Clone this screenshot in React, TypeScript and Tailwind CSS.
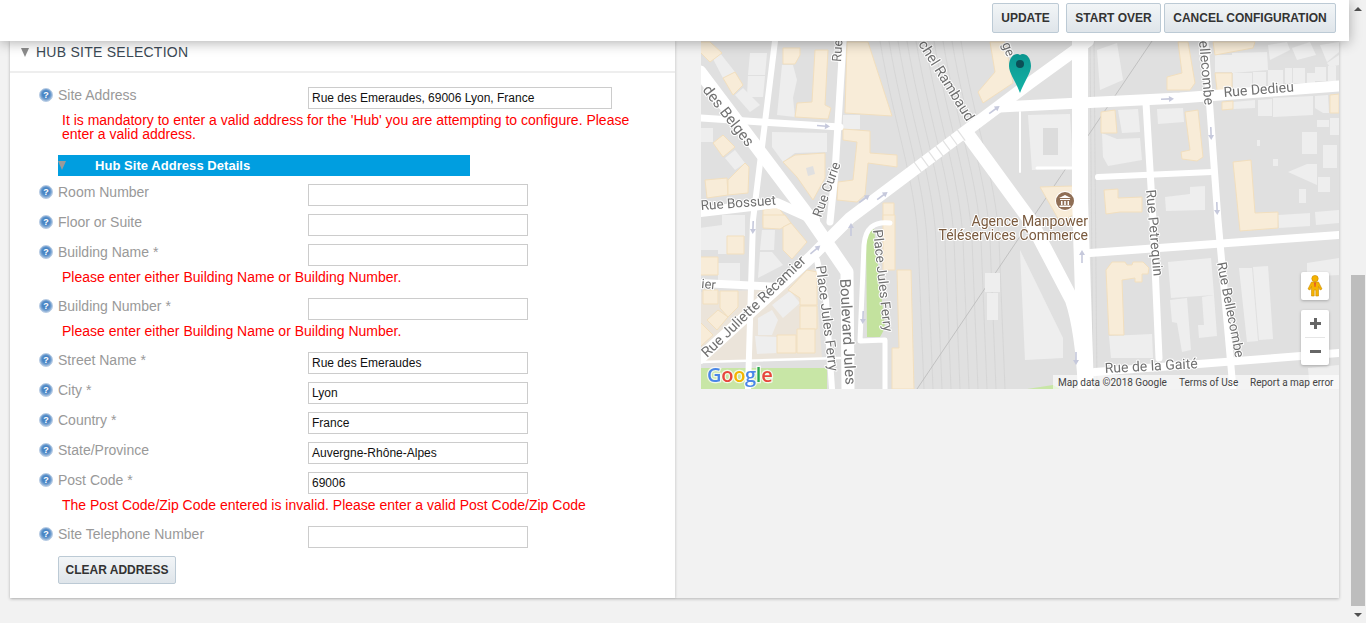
import React from "react";

const ORANGE: string[] = [
  "700,42 710,42 722,53 710,62 700,52",
  "847,42 868,42 892,116 845,113",
  "783,48 800,48 800,55 795,64 783,64",
  "815,50 828,50 825,105 831,108 828,119 795,117 797,103 812,102",
  "723,78 735,72 743,85 733,95",
  "843,129 870,131 870,153 897,155 897,167 868,163 865,195 857,202 837,200 838,182 853,180 857,142 843,140",
  "783,162 795,155 825,153 825,178 813,200 797,177",
  "713,143 723,135 735,147 723,157",
  "705,180 727,178 728,195 707,198",
  "728,180 745,163 749,167 748,193 728,195",
  "978,92 995,72 990,42 1005,42 1013,83 983,103",
  "883,203 894,203 894,220 883,220",
  "763,210 778,207 788,220 763,225",
  "1178,42 1188,42 1195,83 1190,90 1167,90 1167,77 1182,73",
  "1213,42 1255,42 1253,48 1215,55",
  "1215,73 1232,73 1232,90 1217,90",
  "1222,102 1233,101 1233,109 1222,110",
  "1330,95 1339,94 1339,113 1330,113",
  "1101,112 1115,110 1117,133 1101,133",
  "1185,112 1198,110 1203,157 1197,161 1182,159 1181,152 1190,150",
  "1233,162 1251,160 1255,213 1278,212 1278,228 1240,231",
  "1104,190 1118,189 1118,198 1142,197 1142,212 1120,212 1106,214",
  "1040,187 1073,186 1073,215 1060,222",
  "1106,270 1112,262 1125,262 1127,265 1132,265 1133,262 1143,262 1149,268 1148,274 1142,274 1142,282 1135,282 1135,278 1122,280 1124,335 1109,335",
  "763,215 785,215 791,223 780,229 763,228",
  "783,227 791,223 807,242 792,259 783,250",
  "727,236 744,236 744,254 727,254",
  "700,257 718,257 718,275 700,275",
  "703,290 718,290 718,304 703,304",
  "720,291 738,291 738,307 728,317 720,308",
  "707,320 718,310 728,317 717,330",
  "700,322 713,335 700,347",
  "807,270 817,272 817,305 800,305 800,298 788,290",
  "800,306 817,306 817,329 800,329",
  "797,329 815,329 815,353 797,353",
  "777,335 796,335 796,353 777,353",
  "883,215 895,215 895,270 883,270",
  "897,270 911,270 914,389 892,389 892,348 899,348",
];

const LIGHT: string[] = [
  "712,57 720,53 735,72 723,78",
  "735,95 743,88 760,105 750,112",
  "750,53 767,53 765,75 748,75",
  "748,76 765,76 763,97 747,97",
  "782,65 793,65 797,80 793,98 795,117 777,115",
  "843,115 860,115 860,129 843,129",
  "772,132 827,133 827,152 795,153 783,162 772,147",
  "725,158 735,150 745,163 735,170",
  "700,128 713,128 713,142 700,142",
  "1028,115 1070,114 1073,168 1032,170",
  "1097,50 1117,43 1123,80 1100,90",
  "1118,110 1138,109 1140,132 1122,133",
  "1102,133 1117,139 1140,138 1142,160 1108,166 1103,157",
  "1157,109 1183,108 1184,122 1158,124",
  "1215,55 1232,55 1232,72 1215,72",
  "1232,53 1267,52 1268,70 1232,73",
  "1233,73 1252,73 1252,88 1233,90",
  "1253,72 1266,72 1266,87 1253,87",
  "1268,70 1283,70 1283,85 1268,85",
  "1285,68 1292,68 1292,83 1285,83",
  "1293,68 1305,68 1305,83 1293,83",
  "1307,73 1315,73 1315,83 1307,83",
  "1315,67 1326,67 1326,81 1315,81",
  "1328,66 1336,66 1336,81 1328,81",
  "1233,102 1255,100 1255,108 1233,109",
  "1258,100 1272,99 1272,116 1258,116",
  "1273,98 1313,96 1313,115 1273,117",
  "1315,96 1328,95 1329,113 1323,113 1315,108",
  "1317,120 1329,120 1329,127 1317,127",
  "1330,118 1339,118 1339,135 1330,135",
  "1302,132 1317,132 1317,154 1302,154",
  "1323,145 1337,145 1337,168 1323,168",
  "1273,159 1278,159 1278,166 1273,166",
  "1257,140 1260,140 1260,146 1257,146",
  "1288,172 1307,164 1317,164 1317,185",
  "1318,177 1330,177 1330,192 1318,192",
  "1299,189 1306,189 1306,203 1299,203",
  "1165,197 1190,194 1190,187 1205,186 1205,210 1166,211",
  "1268,45 1287,42 1290,50 1270,60",
  "1292,48 1310,42 1316,55 1297,60",
  "1320,45 1339,42 1339,52 1327,62",
  "1327,63 1339,55 1339,65 1330,67",
  "1109,336 1152,334 1153,358 1111,358",
  "1168,262 1211,258 1214,295 1171,298",
  "1170,300 1187,298 1191,350 1182,352 1177,323 1172,322",
  "1202,297 1214,295 1217,336 1199,338 1198,325 1204,325",
  "1239,268 1252,268 1258,341 1247,342",
  "1253,267 1268,266 1273,339 1259,340",
  "1307,263 1339,258 1339,275 1307,277",
  "1308,368 1339,365 1339,389 1310,389",
  "1020,250 1063,338 1063,358 1025,360",
  "985,273 1000,273 1000,292 985,292",
  "987,293 998,293 998,320 987,320",
  "700,228 722,225 722,215 745,215 745,236 727,236 727,254 718,254 718,250 700,250",
  "718,263 740,263 740,281 718,281",
  "762,230 775,230 774,250 760,250",
  "760,252 772,252 783,265 758,278",
  "772,305 790,291 800,303 783,318",
  "758,318 772,310 778,320 772,335 758,335",
  "755,336 777,337 777,353 757,354",
  "1278,215 1310,213 1310,226 1279,228",
  "1315,212 1339,210 1339,223 1316,225",
];

type Road = { d: string; w: number };
const ROADS: Road[] = [
  { d: "M700,358 L810,258 L850,218 L1030,83 L1088,41", w: 12 },
  { d: "M700,72 L810,218 L847,272 L848,389", w: 13 },
  { d: "M968,135 L1030,220 L1072,300 Q1082,330 1085,389", w: 14 },
  { d: "M1080,41 L1080,200 L1086,389", w: 16 },
  { d: "M1000,107 L1180,98 L1339,86", w: 11 },
  { d: "M1205,41 L1218,220 L1233,389", w: 7 },
  { d: "M1146,103 L1153,220 L1159,358", w: 7 },
  { d: "M1098,177 L1212,172", w: 6 },
  { d: "M1090,253 L1339,235", w: 8 },
  { d: "M1095,372 L1339,353", w: 8 },
  { d: "M843,41 L835,173 L830,222", w: 7 },
  { d: "M775,41 L753,220 L748,389", w: 6 },
  { d: "M700,118 L840,127", w: 7 },
  { d: "M700,212 L777,203 L815,220", w: 10 },
  { d: "M700,283 L780,287", w: 8 },
  { d: "M817,260 L826,300 L832,389", w: 6 },
  { d: "M890,223 Q866,220 864,245 L860,341 L885,340 L885,389", w: 5 },
  { d: "M700,362 L840,358", w: 2.5 },
  { d: "M1037,168 L1074,168", w: 3 },
  { d: "M1020,112 L1020,172", w: 2 },
];

const ARROWS: [number, number, number][] = [
  [823, 126, 5],
  [994, 110, -36],
  [864, 199, -36],
  [882, 196, -36],
  [1167, 99, -3],
  [1211, 133, 88],
  [1217, 208, 88],
  [753, 227, 92],
  [851, 230, -90],
  [815, 250, -40],
  [863, 317, 92],
  [1082, 257, -90],
  [1076, 358, 90],
];

type Lbl = { t: string; x: number; y: number; r: number; s?: number };
const LABELS: Lbl[] = [
  { t: "Rue", x: 841, y: 62, r: -86, s: 13 },
  { t: "des Belges", x: 702, y: 90, r: 52, s: 15 },
  { t: "chel Rambaud", x: 918, y: 44, r: 58, s: 14.5 },
  { t: "Rue Bossuet", x: 701, y: 210, r: -4, s: 13.5 },
  { t: "Rue Curie", x: 821, y: 218, r: -70, s: 13.5 },
  { t: "ge", x: 1002, y: 44, r: 70, s: 13 },
  { t: "ellecombe", x: 1199, y: 41, r: 85, s: 14 },
  { t: "Rue Dedieu", x: 1224, y: 97, r: -4.5, s: 14 },
  { t: "Rue Petrequin", x: 1146, y: 190, r: 85, s: 14 },
  { t: "Rue Bellecombe", x: 1217, y: 263, r: 79, s: 13.5 },
  { t: "Rue de la Gaité", x: 1105, y: 373, r: -3, s: 14 },
  { t: "Boulevard Jules", x: 840, y: 279, r: 87, s: 15 },
  { t: "Place Jules Ferry", x: 816, y: 266, r: 83, s: 14 },
  { t: "Place Jules Ferry", x: 873, y: 230, r: 84, s: 13.5 },
  { t: "Rue Juliette Récamier", x: 707, y: 358, r: -44, s: 14.3 },
  { t: "ier", x: 701, y: 288, r: 5, s: 13 },
];

function MapDrawing() {
  const tracks = [0, 1, 2, 3, 4, 5, 6, 7, 8, 9];
  const xwalk = [0, 1, 2, 3, 4, 5, 6];
  return (
    <svg viewBox="701 41 638 348" width="638" height="348" className="block blur-[0.3px] [font-family:Roboto,sans-serif]">
      <defs>
        <linearGradient id="pin" x1="0" y1="0" x2="0" y2="1">
          <stop offset="0" stopColor="#0b9690" />
          <stop offset="1" stopColor="#14b3a6" />
        </linearGradient>
      </defs>
      <rect x="701" y="41" width="638" height="348" fill="#e0e0e0" />
      <polygon points="701,292 760,290 815,268 822,358 701,362" fill="#ebe4da" />
      <rect x="701" y="368" width="126" height="21" fill="#c8e6a6" />
      <polygon points="1027,389 1053,385 1060,389" fill="#c8e6a6" />
      <polygon points="866,232 874,229 885,328 880,337 867,337" fill="#c3e29e" />
      <g fill="none" stroke="#d3d3d3" strokeWidth="0.8">
        {tracks.map((i) => (
          <path key={i} d={`M${880 + i * 9},41 C${893 + i * 9},120 ${915 + i * 9},180 ${918 + i * 9},240 L${924 + i * 9},389`} />
        ))}
        <path d="M1090,41 L1093,389" />
        <path d="M1094,41 L1097,389" />
      </g>
      <path d="M1152,41 L917,389" stroke="#bdbdbd" strokeWidth="0.9" fill="none" />
      {LIGHT.map((p) => (
        <polygon key={p} points={p} fill="#eeeeee" />
      ))}
      <rect x="1043" y="128" width="15" height="27" fill="#dcdcdc" />
      {ORANGE.map((p) => (
        <polygon key={p} points={p} fill="#f8ecd8" stroke="#f2dfbe" strokeWidth="1" />
      ))}
      <polygon points="806,168 813,166 815,174 808,176" fill="#e0e0e0" />
      <g fill="none" stroke="#ffffff" strokeLinejoin="round" strokeLinecap="round">
        {ROADS.map((r) => (
          <path key={r.d} d={r.d} strokeWidth={r.w} />
        ))}
      </g>
      <g stroke="#e2e2e2" strokeWidth="1.2">
        {xwalk.map((i) => {
          const cx = 918 + i * 7.2;
          const cy = 167 - i * 5.4;
          return <line key={i} x1={cx - 4} y1={cy - 5} x2={cx + 4} y2={cy + 6} />;
        })}
      </g>
      {ARROWS.map(([x, y, r]) => (
        <g key={`${x}-${y}`} transform={`translate(${x} ${y}) rotate(${r})`} stroke="#c6c9dc" fill="#c6c9dc">
          <line x1="-6" y1="0" x2="3" y2="0" strokeWidth="1.6" />
          <polygon points="2,-3 7,0 2,3" stroke="none" />
        </g>
      ))}
      <g fill="#707070" stroke="#ffffff" strokeWidth="2" strokeLinejoin="round">
        {LABELS.map((l) => (
          <text key={`${l.t}${l.x}`} transform={`translate(${l.x} ${l.y}) rotate(${l.r})`} fontSize={l.s ?? 13} paintOrder="stroke">
            {l.t}
          </text>
        ))}
      </g>
      <g fill="#7a5a3e" stroke="#ffffff" strokeWidth="2" fontSize="14" textAnchor="end">
        <text x="1088" y="226" paintOrder="stroke">Agence Manpower</text>
        <text x="1088" y="240" paintOrder="stroke">Téléservices Commerce</text>
      </g>
      <circle cx="1065" cy="201" r="10" fill="#ffffff" />
      <circle cx="1065" cy="201" r="9" fill="#8f6e55" />
      <path d="M1059,198 L1065,195 L1071,198 Z M1060,199 H1070 V200 H1060 Z M1061,201 H1062.5 V205 H1061 Z M1064.2,201 H1065.8 V205 H1064.2 Z M1067.5,201 H1069 V205 H1067.5 Z M1059.5,205.5 H1070.5 V207 H1059.5 Z" fill="#ffffff" />
      <path d="M1020,55 C1023,52 1031,55 1031,66 C1031,73 1024,82 1020,93 C1016,82 1009,73 1009,66 C1009,55 1017,52 1020,55 Z" fill="url(#pin)" />
      <circle cx="1020" cy="64" r="4" fill="#0b4f56" />
      <g fontSize="20" fontWeight="600" letterSpacing="-0.3" stroke="#ffffff" strokeWidth="2.5" strokeOpacity="0.75" className="[font-family:'Open_Sans',Roboto,sans-serif]">
        <text x="707" y="382" paintOrder="stroke">
          <tspan fill="#4a86e8">G</tspan>
          <tspan fill="#e8453c">o</tspan>
          <tspan fill="#f4b400">o</tspan>
          <tspan fill="#4a86e8">g</tspan>
          <tspan fill="#2aa84f">l</tspan>
          <tspan fill="#e8453c">e</tspan>
        </text>
      </g>
    </svg>
  );
}

function Pegman() {
  return (
    <svg width="18" height="22" viewBox="0 0 16 22">
      <circle cx="8" cy="3.6" r="3.2" fill="#f5b301" stroke="#c98a00" strokeWidth="0.6" />
      <path d="M4.5,7 H11.5 L15,14 L13,15 L11.5,11.5 V21 H8.8 V15 H7.2 V21 H4.5 V11.5 L3,15 L1,14 Z" fill="#f5b301" stroke="#c98a00" strokeWidth="0.6" />
      <path d="M7,7.5 H9 L8.5,12 H7.5 Z" fill="#e2572c" />
    </svg>
  );
}

function HelpIcon() {
  return (
    <span className="relative mt-px flex h-[14px] w-[14px] shrink-0 items-center justify-center rounded-full border border-[#b4cae3] bg-[radial-gradient(circle_at_50%_45%,#4a86c5_0%,#4a86c5_40%,#93b4d9_68%,#dce6f2_100%)] text-[9px] font-bold leading-none text-white">
      ?
    </span>
  );
}

function Triangle({ cls }: { cls: string }) {
  return <span className={`h-0 w-0 border-x-[4.5px] border-t-[9px] border-x-transparent ${cls}`} />;
}

function Row({ label, value = "", error, wide }: { label: string; value?: string; error?: string; wide?: boolean }) {
  return (
    <div className="flex flex-col">
      <div className="flex items-start">
        <div className="flex w-[269px] shrink-0 items-start gap-[5px] text-[14px] leading-[16px] text-[#999999]">
          <HelpIcon />
          <span>{label}</span>
        </div>
        <div className={`flex h-[22px] items-center border border-[#cccccc] bg-white pl-[3px] text-[12px] text-[#111111] ${wide ? "w-[304px]" : "w-[220px]"}`}>
          {value}
        </div>
      </div>
      {error && <Err>{error}</Err>}
    </div>
  );
}

function Err({ children }: { children: React.ReactNode }) {
  return <p className="mb-[6px] ml-[23px] mt-[4px] w-[575px] text-[14px] leading-[14px] text-[#ff0000]">{children}</p>;
}

function Btn({ children, w }: { children: React.ReactNode; w: string }) {
  return (
    <button className={`flex items-center justify-center rounded-[2px] border border-[#bccad5] bg-gradient-to-b from-[#f2f5f7] to-[#dfe5ea] text-[12px] font-bold text-[#333333] ${w}`}>
      {children}
    </button>
  );
}

export default function App() {
  return (
    <div className="flex h-[623px] w-[1366px] overflow-hidden bg-[#f2f2f2] [font-family:'Liberation_Sans',Arial,sans-serif]">
      <div className="flex w-[1350px] flex-col">
        <header className="relative z-10 mr-px flex h-[41px] shrink-0 items-start justify-end bg-white pr-[13px] pt-[3px] shadow-[0_2px_12px_rgba(0,0,0,0.3)]">
          <Btn w="h-[30px] w-[67px] mr-[7px]">UPDATE</Btn>
          <Btn w="h-[30px] w-[95px] mr-[3px]">START OVER</Btn>
          <Btn w="h-[30px] w-[172px]">CANCEL CONFIGURATION</Btn>
        </header>
        <main className="ml-[10px] flex h-[557px] w-[1329px] shadow-[0_1px_3px_rgba(0,0,0,0.25)]">
          <section className="w-[665px] shrink-0 bg-white shadow-[1px_0_2px_rgba(0,0,0,0.12)]">
            <h2 className="flex h-[32px] items-center gap-[7px] border-b-2 border-[#eeeeee] pb-[8px] pl-[11px] text-[14px] font-normal tracking-[0.25px] text-[#3c4a55]">
              <Triangle cls="border-t-[#8c8c8c]" />
              HUB SITE SELECTION
            </h2>
            <div className="flex flex-col gap-2 pl-[29px] pt-[14px]">
              <Row
                wide
                label="Site Address"
                value="Rue des Emeraudes, 69006 Lyon, France"
                error="It is mandatory to enter a valid address for the 'Hub' you are attempting to configure. Please enter a valid address."
              />
              <div className="ml-[19px] flex h-[21px] w-[412px] items-center bg-[#009ee0]">
                <Triangle cls="border-t-[#9a9a9a]" />
                <span className="ml-[29px] text-[13px] font-bold tracking-[0.05px] text-white">Hub Site Address Details</span>
              </div>
              <Row label="Room Number" />
              <Row label="Floor or Suite" />
              <Row label="Building Name *" error="Please enter either Building Name or Building Number." />
              <Row label="Building Number *" error="Please enter either Building Name or Building Number." />
              <Row label="Street Name *" value="Rue des Emeraudes" />
              <Row label="City *" value="Lyon" />
              <Row label="Country *" value="France" />
              <Row label="State/Province" value="Auvergne-Rhône-Alpes" />
              <Row label="Post Code *" value="69006" error="The Post Code/Zip Code entered is invalid. Please enter a valid Post Code/Zip Code" />
              <Row label="Site Telephone Number" />
              <div className="ml-[19px]">
                <Btn w="h-[28px] w-[118px]">CLEAR ADDRESS</Btn>
              </div>
            </div>
          </section>
          <aside className="flex-1 pl-[26px]">
            <div className="relative h-[348px] w-[638px] overflow-hidden">
              <MapDrawing />
              <div className="absolute left-[600px] top-[231px] flex h-[28px] w-[28px] items-center justify-center rounded-[2px] bg-white shadow-[0_1px_3px_rgba(0,0,0,0.25)]">
                <Pegman />
              </div>
              <div className="absolute left-[600px] top-[269px] flex h-[55px] w-[28px] flex-col items-center rounded-[2px] bg-white shadow-[0_1px_3px_rgba(0,0,0,0.25)]">
                <span className="flex h-[27px] items-center">
                  <svg width="13" height="13" viewBox="0 0 13 13"><path d="M5,1 H8 V5 H12 V8 H8 V12 H5 V8 H1 V5 H5 Z" fill="#666666" /></svg>
                </span>
                <span className="h-px w-[20px] bg-[#e6e6e6]" />
                <span className="flex h-[27px] items-center">
                  <svg width="13" height="13" viewBox="0 0 13 13"><rect x="1" y="5" width="11" height="3" fill="#666666" /></svg>
                </span>
              </div>
              <div className="absolute bottom-0 right-0 flex h-[14px] w-[286px] items-center bg-white/60 pl-[5px] text-[10px] text-[#444444] [font-family:Roboto,sans-serif]">
                <span className="w-[109px] whitespace-nowrap">Map data ©2018 Google</span>
                <span className="ml-[12px] w-[59px] whitespace-nowrap">Terms of Use</span>
                <span className="ml-[12px] whitespace-nowrap">Report a map error</span>
              </div>
            </div>
          </aside>
        </main>
      </div>
      <div className="flex w-[16px] flex-col items-center bg-[#f1f1f1]">
        <div className="flex h-[17px] w-full items-center justify-center">
          <span className="h-0 w-0 border-x-[4px] border-b-[4px] border-x-transparent border-b-[#505050]" />
        </div>
        <div className="mt-[258px] h-[331px] w-[14px] bg-[#bdbdbd]" />
        <div className="flex w-full flex-1 items-center justify-center">
          <span className="h-0 w-0 border-x-[4px] border-t-[4px] border-x-transparent border-t-[#505050]" />
        </div>
      </div>
    </div>
  );
}
